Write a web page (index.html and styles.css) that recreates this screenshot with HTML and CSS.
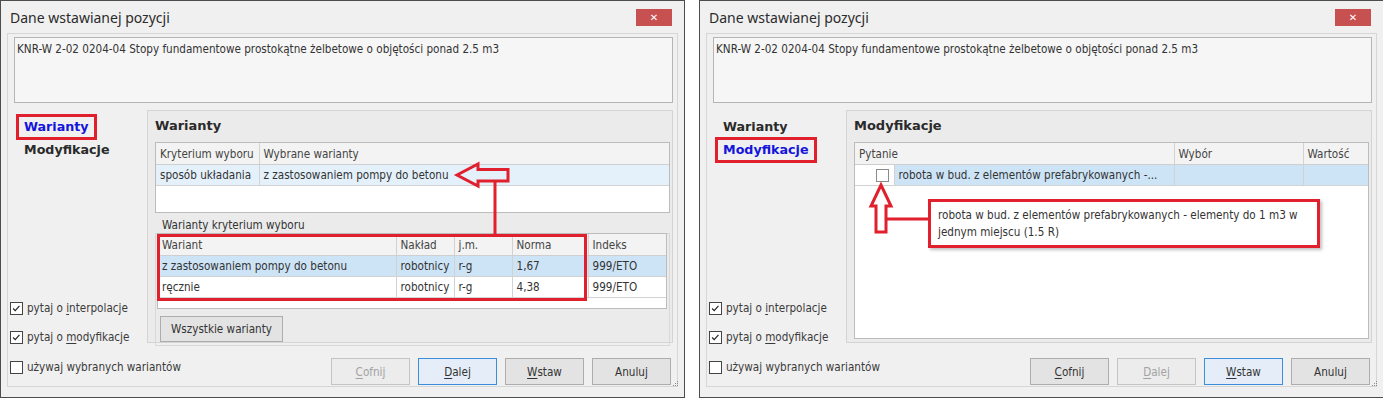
FILE: index.html
```html
<!DOCTYPE html>
<html lang="pl">
<head>
    <meta charset="UTF-8">
    <title>Dane wstawianej pozycji</title>
    <link rel="stylesheet" href="styles.css">
</head>
<body>
<div class="screen">

    <!-- okno 1: warianty -->
    <div class="dialog">
        <div class="titlebar">
            <span class="title">Dane wstawianej pozycji</span>
            <button class="close">&#x2715;</button>
        </div>
        <div class="frame">
            <div class="desc">KNR-W 2-02 0204-04 Stopy fundamentowe prostokątne żelbetowe o objętości ponad 2.5 m3</div>
            <div class="main">
                <div class="side">
                    <div class="nav">
                        <div class="nav-item current marked">Warianty</div>
                        <div class="nav-item">Modyfikacje</div>
                    </div>
                    <div class="options">
                        <label class="check"><span class="box checked"><svg viewBox="0 0 13 13"><path d="M2.5 6.5 L5 9 L10 3.5"/></svg></span><span>pytaj o <u>i</u>nterpolacje</span></label>
                        <label class="check"><span class="box checked"><svg viewBox="0 0 13 13"><path d="M2.5 6.5 L5 9 L10 3.5"/></svg></span><span>pytaj o <u>m</u>odyfikacje</span></label>
                    </div>
                </div>
                <div class="group">
                    <div class="group-title">Warianty</div>
                    <div class="grid grid-top">
                        <table>
                            <colgroup><col style="width:103px"><col></colgroup>
                            <tr class="head"><td>Kryterium wyboru</td><td>Wybrane warianty</td></tr>
                            <tr class="sel-light"><td>sposób układania</td><td>z zastosowaniem pompy do betonu</td></tr>
                        </table>
                    </div>
                    <div class="sub-label">Warianty kryterium wyboru</div>
                    <div class="subframe">
                        <div class="grid grid-bottom">
                            <table>
                                <colgroup><col style="width:238px"><col style="width:58px"><col style="width:58px"><col style="width:76px"><col></colgroup>
                                <tr class="head"><td>Wariant</td><td>Nakład</td><td>j.m.</td><td>Norma</td><td>Indeks</td></tr>
                                <tr class="sel"><td>z zastosowaniem pompy do betonu</td><td>robotnicy</td><td>r-g</td><td>1,67</td><td>999/ETO</td></tr>
                                <tr><td>ręcznie</td><td>robotnicy</td><td>r-g</td><td>4,38</td><td>999/ETO</td></tr>
                            </table>
                        </div>
                        <button class="btn btn-wide">Wszystkie warianty</button>
                    </div>
                </div>
            </div>
            <div class="footer">
                <label class="check"><span class="box"></span><span>używaj wybranych wariantów</span></label>
                <div class="buttons">
                    <button class="btn" disabled><u>C</u>ofnij</button>
                    <button class="btn focus"><u>D</u>alej</button>
                    <button class="btn"><u>W</u>staw</button>
                    <button class="btn">Anuluj</button>
                </div>
            </div>
        </div>
        <svg class="grip" viewBox="0 0 6 6"><rect x="4" y="0" width="1" height="1"/><rect x="2" y="2" width="1" height="1"/><rect x="4" y="2" width="1" height="1"/><rect x="0" y="4" width="1" height="1"/><rect x="2" y="4" width="1" height="1"/><rect x="4" y="4" width="1" height="1"/></svg>
        <svg class="marks" viewBox="0 0 685 398">
            <polygon points="457,175 478,164 478,169.5 508,169.5 508,181 478,181 478,186"/>
            <line x1="495" y1="181" x2="495" y2="235"/>
            <rect x="158.5" y="235.5" width="427" height="64"/>
        </svg>
    </div>

    <!-- okno 2: modyfikacje -->
    <div class="dialog">
        <div class="titlebar">
            <span class="title">Dane wstawianej pozycji</span>
            <button class="close">&#x2715;</button>
        </div>
        <div class="frame">
            <div class="desc">KNR-W 2-02 0204-04 Stopy fundamentowe prostokątne żelbetowe o objętości ponad 2.5 m3</div>
            <div class="main">
                <div class="side">
                    <div class="nav">
                        <div class="nav-item">Warianty</div>
                        <div class="nav-item current marked">Modyfikacje</div>
                    </div>
                    <div class="options">
                        <label class="check"><span class="box checked"><svg viewBox="0 0 13 13"><path d="M2.5 6.5 L5 9 L10 3.5"/></svg></span><span>pytaj o <u>i</u>nterpolacje</span></label>
                        <label class="check"><span class="box checked"><svg viewBox="0 0 13 13"><path d="M2.5 6.5 L5 9 L10 3.5"/></svg></span><span>pytaj o <u>m</u>odyfikacje</span></label>
                    </div>
                </div>
                <div class="group">
                    <div class="group-title">Modyfikacje</div>
                    <div class="grid grid-fill">
                        <table>
                            <colgroup><col style="width:39px"><col style="width:280px"><col style="width:129px"><col></colgroup>
                            <tr class="head"><td colspan="2">Pytanie</td><td>Wybór</td><td>Wartość</td></tr>
                            <tr class="sel"><td class="cell-check"><span class="box"></span></td><td>robota w bud. z elementów prefabrykowanych -...</td><td></td><td></td></tr>
                        </table>
                    </div>
                </div>
            </div>
            <div class="footer">
                <label class="check"><span class="box"></span><span>używaj wybranych wariantów</span></label>
                <div class="buttons">
                    <button class="btn"><u>C</u>ofnij</button>
                    <button class="btn" disabled><u>D</u>alej</button>
                    <button class="btn focus"><u>W</u>staw</button>
                    <button class="btn">Anuluj</button>
                </div>
            </div>
        </div>
        <div class="tooltip">robota w bud. z elementów prefabrykowanych - elementy do 1 m3 w<br>jednym miejscu (1.5 R)</div>
        <svg class="grip" viewBox="0 0 6 6"><rect x="4" y="0" width="1" height="1"/><rect x="2" y="2" width="1" height="1"/><rect x="4" y="2" width="1" height="1"/><rect x="0" y="4" width="1" height="1"/><rect x="2" y="4" width="1" height="1"/><rect x="4" y="4" width="1" height="1"/></svg>
        <svg class="marks" viewBox="0 0 685 398">
            <polygon points="182,185 192,206 187,206 187,232 177,232 177,206 172,206"/>
            <line x1="187" y1="219" x2="229" y2="219"/>
        </svg>
    </div>

</div>
</body>
</html>
```

FILE: styles.css
```css
body {
    margin: 0;
    background: #fff;
    font-family: "DejaVu Sans Condensed", "DejaVu Sans", sans-serif;
    font-size: 11.6px;
    color: #3a3a3a;
}
.screen {
    display: flex;
    gap: 14px;
}
.dialog {
    position: relative;
    flex: none;
    width: 683px;
    height: 396px;
    border: 1px solid #4d4d4d;
    background: #f0f0f0;
}
.titlebar {
    height: 32px;
    display: flex;
    justify-content: space-between;
    align-items: flex-start;
    padding: 0 12px 0 9px;
}
.title {
    margin-top: 8px;
    line-height: 18px;
    font-family: "Noto Sans", sans-serif;
    font-size: 14px;
    color: #2b2b2b;
}
.close {
    margin-top: 8px;
    width: 36px;
    height: 17px;
    padding: 0;
    border: none;
    background: #c75050;
    color: #fff;
    font-family: "DejaVu Sans", sans-serif;
    font-size: 10px;
    font-weight: bold;
    line-height: 17px;
}
.frame {
    margin: 0 6px;
    height: 352px;
    border: 1px solid #d6d6d6;
    display: flex;
    flex-direction: column;
}
.desc {
    margin: 3px 4px 0 6px;
    height: 58px;
    padding: 3px 2px;
    border: 1px solid #b5b5b5;
    background: #f6f6f6;
    line-height: 16px;
    color: #333;
}
.main {
    display: flex;
    height: 247px;
}
.side {
    width: 139px;
    display: flex;
    flex-direction: column;
    justify-content: space-between;
}
.nav {
    padding: 11px 0 0 8px;
}
.nav-item {
    width: max-content;
    border: 3px solid transparent;
    padding: 2px 5px;
    line-height: 16px;
    font-family: "DejaVu Sans", sans-serif;
    font-size: 12.7px;
    font-weight: bold;
    color: #2a2a2a;
}
.nav-item + .nav-item {
    margin-top: -3px;
}
.nav-item.current {
    color: #1414dc;
}
.nav-item.marked {
    border-color: #e0202c;
}
.options {
    display: flex;
    flex-direction: column;
    gap: 13px;
    padding: 0 0 5px 2px;
}
.check {
    display: flex;
    align-items: center;
    gap: 4px;
    height: 16px;
    color: #3a3a3a;
    white-space: nowrap;
}
.check u, .btn u {
    text-decoration-thickness: 1px;
    text-underline-offset: 2px;
}
.box {
    flex: none;
    box-sizing: border-box;
    width: 13px;
    height: 13px;
    border: 1px solid #444;
    background: #fff;
}
.box svg {
    display: block;
    width: 11px;
    height: 11px;
}
.box path {
    fill: none;
    stroke: #222;
    stroke-width: 1.4;
}
.group {
    margin-top: 7px;
    width: 515px;
    height: 229px;
    padding: 0 2px 2px 7px;
    border: 1px solid #d4d4d4;
    background: #ebebeb;
    display: flex;
    flex-direction: column;
}
.group-title {
    height: 31px;
    line-height: 29px;
    font-family: "DejaVu Sans", sans-serif;
    font-size: 13px;
    font-weight: bold;
    color: #2a2a2a;
    flex: none;
}
.grid {
    border: 1px solid #bcbcbc;
    background: #fff;
    flex: none;
}
.grid table {
    width: 100%;
    border-collapse: collapse;
    table-layout: fixed;
}
.grid td {
    height: 20px;
    padding: 0 4px;
    border-right: 1px solid #d2d2d2;
    border-bottom: 1px solid #d2d2d2;
    white-space: nowrap;
    overflow: hidden;
    color: #333;
}
.grid td:last-child {
    border-right: none;
}
.grid tr.head td {
    height: 21px;
    background: #f3f3f3;
    border-bottom-color: #cfcfcf;
    color: #444;
}
.grid tr.sel-light td {
    background: #e4f1fb;
}
.grid tr.sel td {
    background: #cde4f7;
}
.grid-top {
    height: 69px;
}
.grid-bottom {
    height: 74px;
    margin: -1px 0 0 1px;
    width: 508px;
}
.grid-fill {
    flex: 1;
    margin-bottom: 1px;
}
.grid td.cell-check {
    background: #fff !important;
    padding: 0 0 0 21px;
}
.cell-check .box {
    display: block;
    border-color: #8a8a8a;
}
.sub-label {
    margin-top: 5px;
    height: 15px;
    line-height: 15px;
    padding-left: 7px;
    color: #333;
    flex: none;
}
.subframe {
    height: 111px;
    border: 1px solid #d8d8d8;
    flex: none;
}
.btn {
    box-sizing: border-box;
    width: 79px;
    height: 27px;
    padding: 0;
    border: 1px solid #adadad;
    background: #e3e3e3;
    font-family: "DejaVu Sans Condensed", "DejaVu Sans", sans-serif;
    font-size: 11.6px;
    color: #333;
}
.btn.focus {
    border-color: #3c8ddb;
    background: #e5eef8;
}
.btn:disabled {
    border-color: #c4c4c4;
    background: #ececec;
    color: #a2a2a2;
}
.btn-wide {
    width: 123px;
    height: 26px;
    margin: 7px 0 0 4px;
}
.footer {
    flex: 1;
    display: flex;
    justify-content: space-between;
    align-items: flex-start;
    padding: 0 6px 0 2px;
}
.footer .check {
    margin-top: 9px;
}
.buttons {
    display: flex;
    gap: 8px;
    margin-top: 8px;
}
.tooltip {
    position: absolute;
    left: 228px;
    top: 198px;
    width: 372px;
    padding: 5px 7px 4px;
    border: 3px solid #e0202c;
    background: #fff;
    box-shadow: 2px 2px 3px rgba(0, 0, 0, 0.25);
    line-height: 17px;
    color: #333;
    white-space: nowrap;
}
.grip {
    position: absolute;
    right: 5px;
    bottom: 10px;
    width: 6px;
    height: 6px;
    fill: #8a8a8a;
}
.marks {
    position: absolute;
    left: -1px;
    top: -1px;
    width: 685px;
    height: 398px;
    pointer-events: none;
    fill: none;
    stroke: #e0202c;
    stroke-width: 3;
}
```
